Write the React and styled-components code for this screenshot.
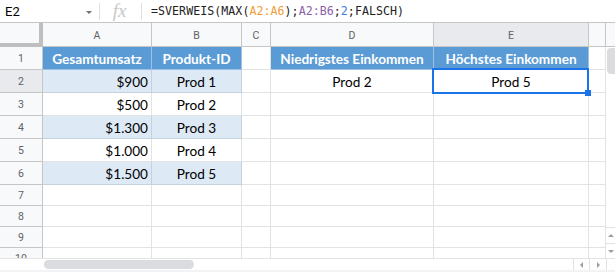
import React from 'react';
import styled, { createGlobalStyle, css } from 'styled-components';

const Global = createGlobalStyle`
  html, body { margin: 0; padding: 0; background: #fff; }
  * { box-sizing: border-box; }
`;

const COLS = [
  { key: 'A', w: 109 },
  { key: 'B', w: 90 },
  { key: 'C', w: 29 },
  { key: 'D', w: 163 },
  { key: 'E', w: 155 },
  { key: 'F', w: 17 },
];
const ROW_H = [23, 23, 23, 23, 23, 23, 21, 21, 21, 21];

const DATA = {
  1: {
    A: { t: 'Gesamtumsatz', v: 'head' },
    B: { t: 'Produkt-ID', v: 'head' },
    D: { t: 'Niedrigstes Einkommen', v: 'head' },
    E: { t: 'Höchstes Einkommen', v: 'head' },
  },
  2: {
    A: { t: '$900', v: 'band', r: true },
    B: { t: 'Prod 1', v: 'band' },
    D: { t: 'Prod 2' },
    E: { t: 'Prod 5', sel: true },
  },
  3: { A: { t: '$500', r: true }, B: { t: 'Prod 2' } },
  4: { A: { t: '$1.300', v: 'band', r: true }, B: { t: 'Prod 3', v: 'band' } },
  5: { A: { t: '$1.000', r: true }, B: { t: 'Prod 4' } },
  6: { A: { t: '$1.500', v: 'band', r: true }, B: { t: 'Prod 5', v: 'band' } },
};

const Frame = styled.div`
  width: 615px;
  height: 272px;
  overflow: hidden;
  display: flex;
  flex-direction: column;
  background: #fff;
`;

/* ---------- formula bar ---------- */
const FormulaBar = styled.div`
  height: 23px;
  flex: none;
  display: flex;
  align-items: center;
  border-bottom: 1px solid #c4c7c5;
`;
const NameBox = styled.div`
  width: 99px;
  height: 100%;
  display: flex;
  align-items: center;
  padding-left: 5px;
  font-family: Roboto, "Liberation Sans", sans-serif;
  font-size: 13px;
  color: #000;
  position: relative;
`;
const Caret = styled.span`
  position: absolute;
  left: 86px;
  top: 11px;
  width: 0;
  height: 0;
  border-left: 3px solid transparent;
  border-right: 3px solid transparent;
  border-top: 3px solid #707070;
`;
const Divider = styled.div`
  width: 1px;
  height: 17px;
  background: #e0e0e0;
  flex: none;
`;
const Fx = styled.div`
  width: 41px;
  text-align: center;
  font-family: "Liberation Serif", serif;
  font-style: italic;
  font-size: 19px;
  color: #c8c8c8;
  line-height: 22px;
  padding-right: 2px;
`;
const Formula = styled.div`
  padding-left: 9px;
  font-family: "DejaVu Sans Mono", "Liberation Mono", monospace;
  font-size: 11.6px;
  color: #222;
  white-space: nowrap;
  letter-spacing: 0.05px;
`;
const Ref = styled.span`
  color: ${(p) => p.$c};
`;

/* ---------- body ---------- */
const Body = styled.div`
  display: flex;
  height: 235px;
  flex: none;
`;
const Sheet = styled.div`
  width: 606px;
  height: 235px;
  overflow: hidden;
  display: grid;
  grid-template-columns: 43px ${COLS.map((c) => c.w + 'px').join(' ')};
  grid-template-rows: 24px ${ROW_H.map((h) => h + 'px').join(' ')};
  font-family: Lato, "Open Sans", sans-serif;
`;
const Corner = styled.div`
  background: #f8f9fa;
  border-right: 4px solid #bfbfbf;
  border-bottom: 4px solid #bfbfbf;
`;
const ColHead = styled.div`
  background: ${(p) => (p.$sel ? '#e8eaed' : '#f8f9fa')};
  border-right: 1px solid #c4c7c5;
  border-bottom: 1px solid #c4c7c5;
  display: flex;
  align-items: center;
  justify-content: center;
  font-family: Roboto, "Liberation Sans", sans-serif;
  font-size: 10.5px;
  color: #5f6368;
  padding-top: 1px;
`;
const RowHead = styled(ColHead)`
  align-items: center;
  padding-top: 0;
`;

const variants = {
  head: css`
    background: #5b9bd5;
    color: #fff;
    font-weight: 700;
    border-right-color: #9cc0e6;
    border-bottom-color: #9cc0e6;
  `,
  band: css`
    background: #dde9f5;
    border-right-color: #c5d1dd;
    border-bottom-color: #c5d1dd;
  `,
  plain: css``,
};

const Cell = styled.div`
  position: relative;
  border-right: 1px solid #e2e3e3;
  border-bottom: 1px solid #e2e3e3;
  display: flex;
  align-items: center;
  justify-content: ${(p) => (p.$right ? 'flex-end' : 'center')};
  padding: 1px 3px 0;
  font-size: 13.6px;
  color: #000;
  white-space: nowrap;
  overflow: visible;
  ${(p) => variants[p.$v || 'plain']}
`;
const Selection = styled.div`
  position: absolute;
  left: -2px;
  top: -2px;
  right: -1px;
  bottom: -2px;
  border: 2px solid #1a73e8;
  pointer-events: none;
  z-index: 2;
`;
const Handle = styled.div`
  position: absolute;
  right: -4px;
  bottom: -4px;
  width: 6px;
  height: 6px;
  background: #1a73e8;
`;

const VScroll = styled.div`
  width: 9px;
  flex: none;
  display: flex;
  flex-direction: column;
  background: #fff;
`;
const VTop = styled.div`
  height: 24px;
  background: #f8f9fa;
  border-bottom: 1px solid #c4c7c5;
`;
const VTrack = styled.div`
  flex: 1;
  padding-top: 1px;
`;
const VThumb = styled.div`
  margin-left: 1px;
  width: 8px;
  height: 26px;
  border-radius: 4px 0 0 4px;
  background: #dadce0;
`;
const ArrowBtn = styled.div`
  height: ${(p) => p.$h}px;
  border-top: 1px solid #e2e3e3;
  display: flex;
  align-items: center;
  justify-content: center;
  padding-left: 1px;
`;
const Tri = styled.span`
  width: 0;
  height: 0;
  ${(p) =>
    p.$dir === 'up' &&
    css`
      border-left: 3px solid transparent;
      border-right: 3px solid transparent;
      border-bottom: 3px solid #9e9e9e;
    `}
  ${(p) =>
    p.$dir === 'down' &&
    css`
      border-left: 3px solid transparent;
      border-right: 3px solid transparent;
      border-top: 3px solid #9e9e9e;
    `}
  ${(p) =>
    p.$dir === 'left' &&
    css`
      border-top: 3px solid transparent;
      border-bottom: 3px solid transparent;
      border-right: 3px solid #9e9e9e;
    `}
  ${(p) =>
    p.$dir === 'right' &&
    css`
      border-top: 3px solid transparent;
      border-bottom: 3px solid transparent;
      border-left: 3px solid #9e9e9e;
    `}
`;

/* ---------- bottom scrollbar ---------- */
const HBar = styled.div`
  height: 14px;
  flex: none;
  display: flex;
  border-top: 1px solid #e2e3e3;
  position: relative;
`;
const HTrack = styled.div`
  width: 573px;
  padding: 1px 0 0 44px;
`;
const HThumb = styled.div`
  width: 150px;
  height: 9px;
  border-radius: 5px;
  background: #dadce0;
`;
const HBtn = styled.div`
  width: ${(p) => p.$w}px;
  border-left: 1px solid #e2e3e3;
  display: flex;
  align-items: center;
  justify-content: center;
  padding-bottom: 2px;
`;
const TabPeek = styled.div`
  position: absolute;
  left: 0;
  right: 0;
  bottom: 0;
  height: 2px;
  background: #f1f3f4;
`;

export default function App() {
  return (
    <Frame>
      <Global />
      <FormulaBar>
        <NameBox>
          E2
          <Caret />
        </NameBox>
        <Divider />
        <Fx>fx</Fx>
        <Divider />
        <Formula>
          =SVERWEIS(MAX(<Ref $c="#f09d36">A2:A6</Ref>);<Ref $c="#8a5fa8">A2:B6</Ref>;
          <Ref $c="#3d7de0">2</Ref>;FALSCH)
        </Formula>
      </FormulaBar>
      <Body>
        <Sheet>
          <Corner />
          {COLS.map((c) => (
            <ColHead key={c.key} $sel={c.key === 'E'}>
              {c.key === 'F' ? '' : c.key}
            </ColHead>
          ))}
          {ROW_H.map((h, i) => {
            const r = i + 1;
            const row = DATA[r] || {};
            return (
              <React.Fragment key={r}>
                <RowHead $sel={r === 2}>{r}</RowHead>
                {COLS.map((c) => {
                  const d = row[c.key];
                  return (
                    <Cell key={c.key} $v={d && d.v} $right={d && d.r}>
                      {d && d.t}
                      {d && d.sel && (
                        <Selection>
                          <Handle />
                        </Selection>
                      )}
                    </Cell>
                  );
                })}
              </React.Fragment>
            );
          })}
        </Sheet>
        <VScroll>
          <VTop />
          <VTrack>
            <VThumb />
          </VTrack>
          <ArrowBtn $h={16}>
            <Tri $dir="up" />
          </ArrowBtn>
          <ArrowBtn $h={15}>
            <Tri $dir="down" />
          </ArrowBtn>
        </VScroll>
      </Body>
      <HBar>
        <HTrack>
          <HThumb />
        </HTrack>
        <HBtn $w={16}>
          <Tri $dir="left" />
        </HBtn>
        <HBtn $w={17}>
          <Tri $dir="right" />
        </HBtn>
        <HBtn $w={9} />
        <TabPeek />
      </HBar>
    </Frame>
  );
}
